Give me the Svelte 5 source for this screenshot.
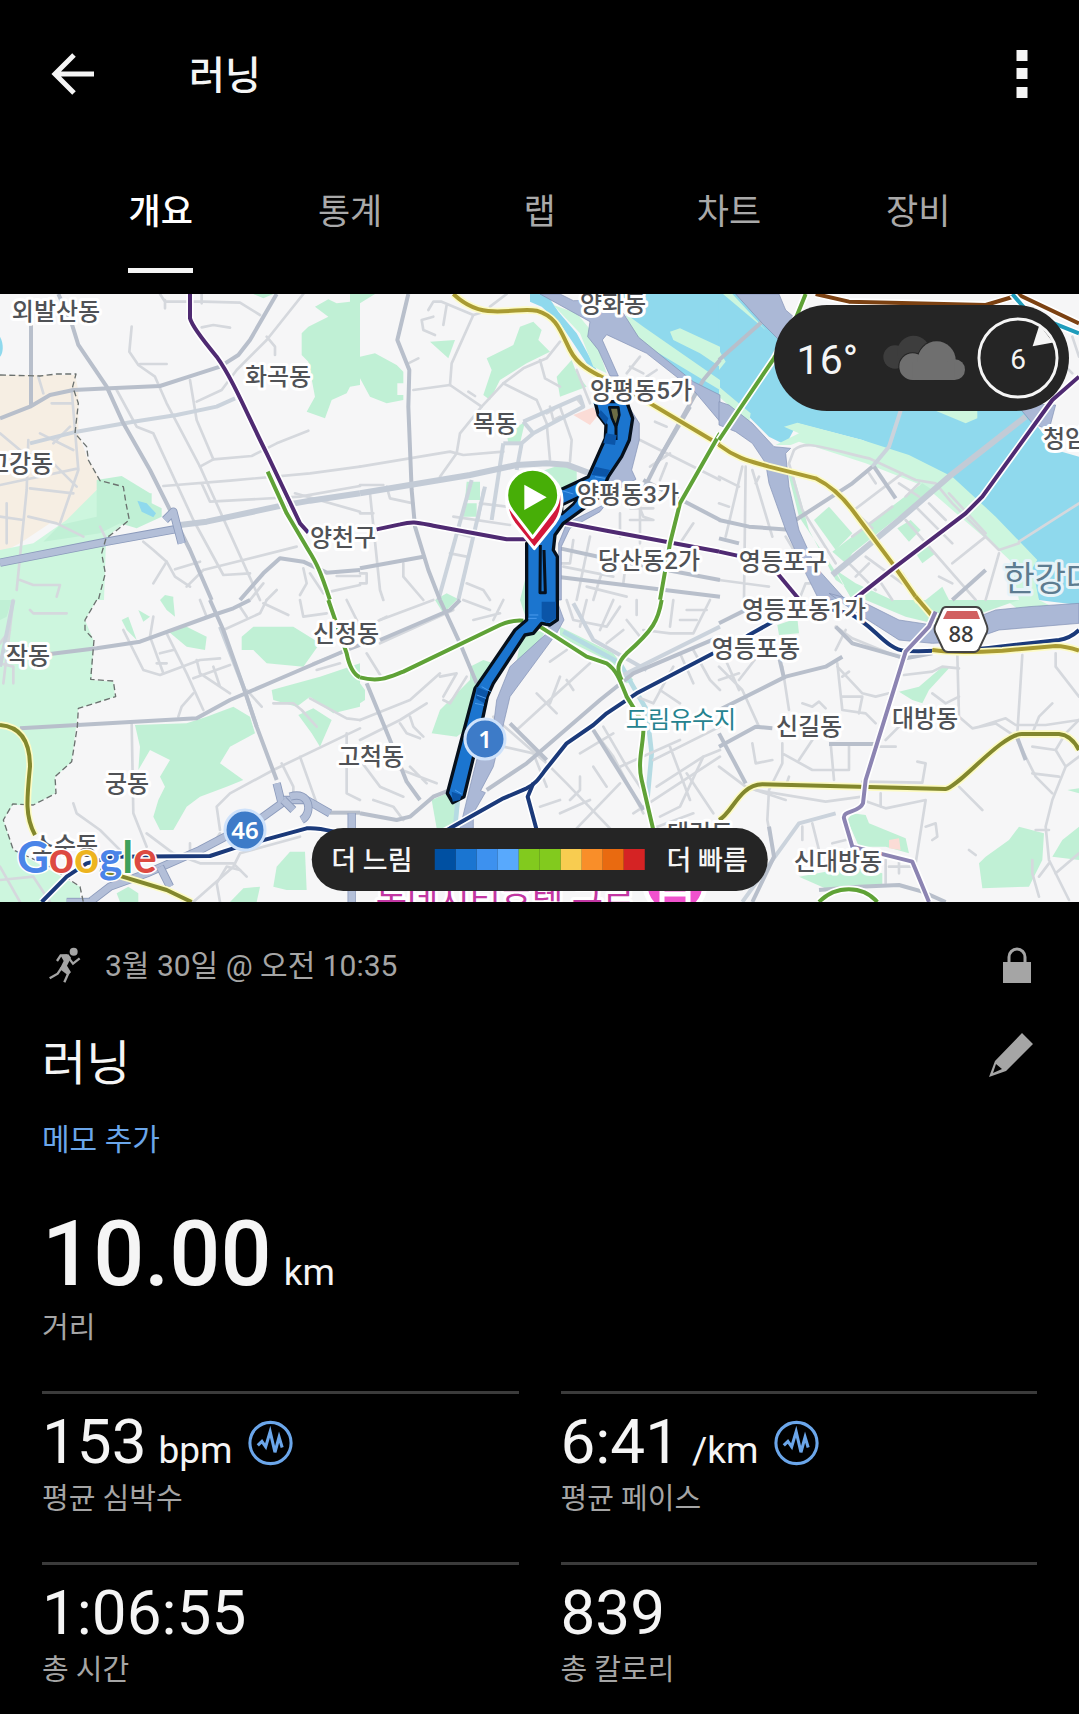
<script lang="ts">
  type Sheet = { x: number; y: number; paths: Record<string, string[]> };

  const tabs = ['개요', '통계', '랩', '차트', '장비'];
  let activeTab = $state('개요');

  const stats = [
    { value: '153', unit: 'bpm', label: '평균 심박수', zone: true },
    { value: '6:41', unit: '/km', label: '평균 페이스', zone: true },
    { value: '1:06:55', unit: '', label: '총 시간', zone: false },
    { value: '839', unit: '', label: '총 칼로리', zone: false }
  ];

  const paceColors = [
    '#0050a2', '#1a75d1', '#3d91ef', '#58a9fd', '#82ca1e',
    '#82ca1e', '#f8cc50', '#f98e29', '#e96a10', '#d52324'
  ];

  // Drawing order of the base map, bottom to top
  const layers = ['water', 'rural', 'meadow', 'park', 'pink', 'land', 'pond', 'canal', 'minor', 'road', 'major', 'arterial', 'expressway', 'freeway', 'border'];

  const transit = ['navy', 'olive', 'gold', 'brown', 'cyan', 'violet', 'purple', 'green'];

  // Map sheets, each one in its own coordinates at three units to a pixel
  const sheets: Sheet[] = [
    {
      x: 0, y: 0,
      paths: {
        rural: ['M0 255H225L235 300V430L250 470L260 500L300 570L290 600L250 700H150L60 760L0 790Z'],
        meadow: ['M100 760L200 690L290 600L370 590L385 690L340 725L318 750L312 930H0V780Z'],
        park: [
          'M290 570L365 558L450 610H455V640L485 655V680L410 715L360 700L300 730L130 755L180 705L290 680Z',
          'M925 110L985 80L945 50L985 28L1010 40L1050 35V12H1080V285L1050 290L1040 310L995 330L975 385L920 365L945 320L925 215L905 195V130Z',
          'M480 930L495 915L520 920V930Z',
          'M760 12H820L790 25Z'
        ],
        pond: ['M412 632L440 640L468 670L460 682L425 665Z', 'M0 140C12 160 10 190 0 200Z'],
        minor: [
          'M480 12L495 35H610L720 38L780 75M605 112L640 105L690 113M495 30V55M605 12V40',
          'M395 110L388 185L415 225L465 260L500 340L600 530L690 730L780 930',
          'M420 222H500M570 270L590 390L640 508L755 498L830 460L925 422',
          'M590 335L665 300L710 240L800 150L910 12M800 140L825 170V195',
          'M350 300L410 410L460 430L580 690L670 855L750 850M600 530L640 508',
          'M490 588L690 572L930 550L1080 530M605 580L630 635L900 620L1080 588',
          'M885 610L1080 665M610 840L890 770M610 840L560 890M430 755L460 780L500 815L525 860L570 890',
          'M500 815L460 880M525 838L600 815M910 835L920 880L900 915M930 850L970 910M1010 858H1080M990 905L1080 885',
          'M85 450L80 600L50 900M215 300L235 540L180 700M115 260L130 310M155 340H215M0 430L60 480M0 585L235 535',
          'M90 595L220 610M85 680L170 700L250 740M300 710L320 750M60 870L100 885H180L170 920M830 900L800 930M750 930L790 880',
          'M80 490L160 520L230 590M120 430L220 480M160 460L210 410M0 680L70 690M20 640V760'
        ],
        road: ['M90 460L230 425L400 395L530 375L650 350L705 325'],
        arterial: ['M540 705L620 695L830 650L930 632L1080 610'],
        major: [
          'M93 90V350', 'M175 12L215 100L235 165L320 290L370 400L450 540L510 660L570 780L635 930',
          'M0 385L90 350L150 315L220 300L330 295L480 288L560 262L660 230L715 195L750 150L830 12',
          'M720 930L790 850L840 805L910 815L980 848L1080 840'
        ],
        expressway: ['M0 818L320 755L535 716', 'M495 690L520 665L545 760'],
        border: ['M0 255L120 258L170 252H228L218 290L235 340L225 430L260 470L265 510L300 572L370 590L378 640L388 690L345 725L318 745L305 790L316 850L295 930'],
        purple: ['M570 12V85C575 105 600 140 650 200C700 270 740 370 800 490L900 700L925 728'],
        green: ['M803 545L860 670L925 780C950 820 960 840 990 930']
      }
    },
    {
      x: 1080, y: 0,
      paths: {
        water: ['M790 12H1080V330L1000 280L860 170L800 80Z', 'M510 12H560L595 65L650 130L710 240L680 220L600 100L545 50L510 35Z'],
        meadow: ['M795 70L850 110L1080 270V300L830 150Z', 'M580 45L650 70L700 130L740 250L700 230L660 130Z', 'M930 125L960 115L1080 170V230L1020 190L940 150Z'],
        park: [
          'M380 205L460 165L480 110L520 95L545 120L535 150L570 185L500 220L420 270L390 330L370 315L395 240Z',
          'M0 200L45 190L110 225L130 245V280H112V315H130V330L80 340L30 320L0 265Z',
          'M210 155L285 150L265 205Z', 'M590 260L635 210L650 250L680 290L600 320Z',
          'M540 545L600 525L650 540V570L600 600Z', 'M320 575H360V630H315Z', 'M315 640H350V680H310Z',
          'M440 430L495 395L480 460H445Z', 'M225 930L260 910L300 930Z', 'M480 930L500 850V930Z', 'M0 12H45L0 40Z'
        ],
        pink: ['M640 375L700 352L715 375L690 405Z'],
        minor: [
          'M0 530L270 485L310 495L430 485M160 300L270 285L365 350L430 280L490 235L560 205L600 155',
          'M390 60L340 75L275 220L270 285M340 75L245 35H220L205 60M260 45L250 105M220 80L185 90L190 120L225 135',
          'M365 350L300 430L290 490L240 560M430 280L530 330L560 400L570 510M600 350L635 450L630 515',
          'M540 210L555 265L600 290M650 240L690 340M325 305L345 318M145 220L175 205M390 50L440 12',
          'M30 610L60 900L70 930M0 670H40M80 590L90 625L160 640M0 585H70',
          'M280 680L450 705M290 730L330 740M270 790L320 800M320 880L370 900L390 930M130 820V860L190 930M0 850H20V880H0',
          'M560 370L580 360M570 350L580 390L600 380M650 325L670 350M360 640L440 650M355 690L370 600',
          'M840 450L1080 570M870 530L930 490M920 520L900 570M800 250L840 200M810 230L850 250M885 395L920 410M860 260L890 240',
          'M830 630L850 680L880 690M810 655H880M810 690H880M840 640V760M780 670V740M1000 700L960 760',
          'M690 740L650 930M640 750L630 820L600 820M740 800L700 930M610 830L760 860M680 890L800 920M800 800L790 880M760 800H800'
        ],
        road: ['M490 395L660 320L670 350L520 430L485 460L470 540', 'M490 395L520 430', 'M430 460L395 690', 'M335 570L235 930', 'M375 590L295 930', 'M430 460H485'],
        major: [
          'M145 12L112 150L148 240L145 350L155 600L165 710L205 840L240 930',
          'M0 835L190 800', 'M990 350L890 520', 'M1080 210L1030 270L890 520L850 600', 'M850 570L1080 690',
          'M600 775L760 810L1080 870', 'M590 860L1080 920'
        ],
        arterial: ['M0 610L330 555L470 525L560 520L620 524L690 550'],
        freeway: [
          'M540 12L690 95L683 140L715 180L750 258H775L727 150L740 134L860 190L1000 300L1080 395V315L1000 275L836 142L790 70L740 30L640 32L600 12Z',
          'M800 340L838 400V450L815 540L828 568L770 600L745 570L805 440Z',
          'M740 640L620 700L596 760V930H604V770L630 715L720 665Z'
        ],
        gold: ['M280 12C310 40 350 64 400 64C460 66 490 55 530 62C590 80 600 120 630 180C660 240 720 255 800 300L870 340L1080 465'],
        purple: ['M50 718L120 703C160 693 170 697 220 707L440 748H520', 'M600 695L740 722L1080 785'],
        green: ['M1080 430L960 640L930 760L900 930']
      }
    },
    {
      x: 2157, y: 0,
      paths: {
        water: ['M0 12H60L240 170L700 340L920 362L1010 480L1080 500V930H960L830 690L700 570L430 450L235 400L200 465L150 440L0 290Z'],
        meadow: [
          'M195 410L235 398L430 450L570 495L700 560L830 680L955 810L925 860L840 780L700 660L620 590L440 520L240 455L215 465L170 465L240 430Z',
          'M0 180L20 215L0 240Z', 'M0 290L95 370L90 400L0 320Z', 'M650 362H775V385L740 400Z', 'M12 12H40L140 120Z', 'M870 790L940 830L960 930H900Z'
        ],
        park: [
          'M285 690L330 650L400 730L350 780Z', 'M340 785L610 580L640 600L400 790L380 820Z',
          'M205 540L240 680L340 830L400 930H440L350 870L270 720L220 540Z',
          'M535 715L575 690L605 720L570 755Z', 'M590 790L620 765L650 790L610 820Z', 'M620 930L670 890L690 930Z', 'M350 840L410 880L520 930H400Z'
        ],
        minor: [
          'M225 480C260 450 300 470 450 505L590 570L650 580L700 640L840 780L900 760M225 480L210 520L250 660L350 820',
          'M350 610L460 715M405 660L550 550M450 550L470 580M540 580L600 620M600 580L560 620M400 740L520 650',
          'M590 650L700 760M630 640L680 690M690 610L800 730M620 760L690 700M700 820L800 740M560 690L700 850L770 930',
          'M550 850L600 930M660 860L700 880M800 930L840 790M390 820L470 900M410 860L450 820M480 870L520 930M440 800L550 880',
          'M80 530L75 930M20 740L70 530M100 540L160 740M0 560L60 590M120 560L110 580M0 640L30 650M0 870L150 890M200 740L230 790',
          'M1080 640L900 755M240 930L260 880H300M1020 160V210L1060 250M1060 140L1080 200'
        ],
        road: ['M545 362L510 470L460 530'],
        major: ['M135 90L0 210', 'M460 530L400 580L230 690', 'M465 530L530 625', 'M0 690L90 710L220 720', 'M0 745L60 760', 'M800 840L700 930'],
        arterial: ['M920 380L690 560L540 690L340 855'],
        freeway: [
          'M50 12H180L200 60L235 90L180 150L130 100Z', 'M0 335L30 345L100 400L165 470L215 475L200 490L210 590L240 720L290 830L380 930H300L260 850L200 720L150 580L140 520L100 460L50 425L0 405Z',
          'M890 340L1010 345L990 420L940 400Z'
        ],
        gold: ['M0 465C60 510 100 515 150 530L290 565C340 590 370 620 400 660L520 820L600 935'],
        brown: ['M290 12L390 35L800 45L900 15L1080 100'],
        cyan: ['M880 12L930 70L1080 130'],
        purple: ['M1080 260L1000 330L790 620L740 670L530 830L390 940', 'M0 785L55 797', 'M150 820L250 940'],
        green: ['M260 12L220 110L165 205L60 360L0 450']
      }
    },
    {
      x: 0, y: 930,
      paths: {
        meadow: ['M0 0H290L255 60L280 120L275 240L340 245L345 290L235 325L215 485L165 530V580L100 615H38L10 660L40 750L240 860V906H0Z'],
        park: [
          'M365 60L385 50L410 120L380 90Z', 'M415 30L450 50L430 65Z', 'M480 0H520L525 50L500 30Z',
          'M500 90L560 80L620 110L615 150L560 140Z', 'M725 110L760 80H880L960 130L910 200L800 190L760 150L725 150Z',
          'M815 270L960 230L1080 190V320L1000 340L930 290L890 320L820 300Z', 'M895 345L940 325L995 360L960 440L935 400Z',
          'M405 375L560 370L620 350L700 320L750 350L765 400L690 440L660 490L730 540L680 560L600 590L560 620L520 690L480 690L460 650L475 600L495 560L480 530L510 480L450 450L415 510L420 440Z',
          'M830 800L870 755H915L920 870H860L820 860Z', 'M350 880L385 860L415 880V906H360Z', 'M690 906L730 865L780 860L770 906Z',
          'M0 0H35L20 50L0 60Z'
        ],
        minor: [
          'M395 370L400 640L440 740M820 510L1080 385M820 510L690 580L650 620L660 690M900 470L950 610M845 490L880 560V600',
          'M220 610L230 640L300 690L370 760M440 700L520 760L600 790H700L740 830M370 90L430 210L480 225L600 180L660 175',
          'M500 100L560 220L610 330M460 50L450 110L490 220M930 295L1040 355L1080 360M580 906L700 800L720 760L900 710',
          'M820 310H880L905 330L950 380M590 180L600 220L690 280M580 235L690 195M640 200L660 260M580 280L545 320L535 350M740 270L785 320',
          'M670 90L780 40L800 0M720 20L740 50M600 0L620 50M900 0L910 50L980 40M790 10L865 45M1040 0L1080 80M480 160L520 150M470 190H500',
          'M1040 500V580L1080 600M940 190L1020 160M950 210L1020 190M0 840L100 830L150 906M0 800L60 906M570 730V760M640 730L660 700M660 906L650 850L680 800L720 810M1040 400V440',
          'M40 0L10 250M90 30L100 40H200M0 130L30 90M0 190L40 200V250'
        ],
        road: ['M40 0L0 200', 'M660 80L730 260L770 380'],
        major: [
          'M630 0L670 90L730 260L770 380L830 540', 'M150 162L290 145L420 125L640 45L700 25L750 0',
          'M60 385L590 355L690 300L830 240L1040 150L1080 135', 'M300 770H500', 'M990 638H1080'
        ],
        expressway: [
          'M830 550L845 610L790 650L600 750L440 820L330 860L270 906', 'M850 600H920L990 640',
          'M870 590C930 570 940 640 905 660M850 600L880 630', 'M1055 640V906', 'M480 800L510 860', 'M200 906H270'
        ],
        border: [
          'M290 0L255 60V90L282 120L272 238L340 243L347 290L235 325L232 380L215 485L165 530L168 580L100 615L38 612L10 660L40 750L150 800L240 860L250 906'
        ],
        olive: ['M0 375C60 380 90 420 90 500C80 600 75 650 105 705', 'M300 810L385 835L500 870L575 906'],
        navy: ['M125 906L200 830L260 790L340 770L630 768L700 745L810 715L920 685C970 680 1000 700 1080 710'],
        green: ['M985 0L1040 160C1050 210 1065 225 1080 232']
      }
    },
    {
      x: 1080, y: 930,
      paths: {
        park: [
          'M370 180L400 190L330 380L290 410L215 400L240 330L330 240V200Z', 'M500 100L560 90L460 240L480 130Z',
          'M215 600L260 580L300 600L290 685H230Z', 'M600 80L760 160L820 240L800 250L720 170L600 110Z', 'M225 0H290L250 40Z', 'M0 250L15 270V300L0 310Z',
          'M480 0H500V60Z'
        ],
        canal: ['M610 95L780 190L860 330L875 460L860 620', 'M293 600L285 685'],
        minor: [
          'M60 60L220 0M60 130L280 30M240 220L150 300L0 360M250 290L290 220L240 230M250 300L270 310L320 230',
          'M0 420L120 360L200 310M120 370L140 400L180 415M150 350L160 380L190 410M100 500L230 550M150 500L200 550M0 480L60 560L130 590',
          'M400 350L560 490L620 550L750 685M470 390L690 190M530 280L590 340M600 230L570 310M620 240L640 270M570 185L620 150',
          'M560 560L520 460L430 440M540 620L600 600M660 530V570L630 600M650 685L780 550M700 500L740 560M600 640L690 600',
          'M700 390L760 470L850 640M730 380L800 500L860 590M660 460L760 400M780 500L960 420M880 480L1080 380M930 440L990 600M1080 450L1030 470L960 620L900 650',
          'M820 640L1080 470M890 560L1030 470M980 520L1060 640M880 685L1000 640M940 200L880 310L830 290M900 270L960 310M960 160L1000 250M1000 150L1050 240L1080 270',
          'M620 0L640 60L740 80L780 20M680 0L660 80M760 0L720 90M830 0V45M850 90L930 100H1000L1050 0M940 0L930 80M980 30H1040M960 60H1010M740 130L790 90M800 60L840 110',
          'M40 600L100 620L130 660M340 60L420 40M430 0L400 60M20 80L80 50M20 160L70 240M310 0L390 30'
        ],
        road: ['M780 230L1080 80', 'M640 10L700 120L860 210'],
        major: [
          'M1080 110L820 220L720 300L500 490L380 570', 'M0 640L110 660L150 650L220 590L270 570', 'M20 250L90 420L140 545L180 600',
          'M60 120L270 30L300 0', 'M240 0L300 130L350 250', 'M450 370L560 480', 'M700 390L850 630'
        ],
        freeway: ['M590 0L612 60L590 100L450 290L400 500L362 572L376 578L340 640V685H300L330 560L350 480L400 380L410 300L450 200L560 100Z'],
        navy: ['M0 710C120 720 200 730 270 685L430 595L500 565C530 550 540 530 560 505L620 430L700 375L740 340L830 280L1060 160', 'M520 550L503 590L530 690'],
        green: [
          'M0 232C60 248 90 230 130 215L420 75C450 62 470 60 490 62', 'M540 80L680 170L740 190C770 210 780 240 800 290L850 370C855 420 830 480 845 540L880 690',
          'M905 0C895 60 880 90 800 160C770 190 770 210 785 240'
        ]
      }
    },
    {
      x: 2157, y: 930,
      paths: {
        water: ['M960 0H1080V15L1000 5Z'],
        meadow: ['M860 0H960L1000 20L900 30Z'],
        park: [
          'M440 0H900L800 35L740 60L640 70L560 50Z', 'M175 75L235 55L240 100L180 105Z',
          'M540 275L600 260L670 200L690 205L630 270L610 310L580 300Z', 'M385 660L400 640L440 645L450 670L560 715L570 760L500 740L420 740Z',
          'M240 830L400 800L490 820V860L330 870Z', 'M780 790L800 770L870 720L900 680L975 700L970 780L930 860L790 865Z', 'M1030 720L1080 680V780L1000 770Z',
          'M1045 570L1080 565V580Z'
        ],
        pink: ['M510 720L540 715L545 750L510 745Z'],
        minor: [
          'M0 200L70 270L120 380M60 240L130 150M20 180L60 270M190 200L210 330M355 190L370 330L440 340L470 370M370 290H430L420 340M355 200L430 280L470 290L510 280M370 230L390 215',
          'M715 165L720 350L760 385L830 370L890 410L950 530L1000 580M780 380L860 355L890 375H980L1080 360M910 165L895 400M1010 160V200L1080 290M1000 310L960 350L940 400',
          'M640 280L680 310L720 290M555 225L640 215L670 200L720 205M350 150L380 90M350 80L400 115L560 180M250 310L280 320L300 305L320 325M280 350H320',
          'M335 430L345 540M390 435V510L280 510L190 460V430M190 440V490L150 570L145 660L160 740M100 430L110 490L160 480M240 480L280 420M480 440H530M500 420L540 380',
          'M110 570L320 605L430 590M430 545L610 548L620 490L595 485M430 600L500 625L620 600L590 790L600 830M485 580V620M620 680L650 670L655 710L640 720M720 560L790 630',
          'M280 670L300 750M250 680V720M1080 470L1040 500L1000 600L980 680L990 780L1050 900M940 520L1020 530M950 690H990M940 440L1010 450M1040 500L1010 450L1040 400L1080 360',
          'M940 780V820L960 890M500 780V850M540 780V820M510 800H580M960 830L990 790M750 750L770 765M1010 820L1080 760M0 500L80 560L200 600M0 240L60 220M340 730L380 720M210 530L200 560'
        ],
        road: ['M70 906L240 670L350 640'],
        major: [
          'M0 330L200 230L320 200L370 170', 'M0 440L110 380L160 385', 'M0 400L80 550', 'M330 432H480', 'M180 170L195 235', 'M150 680L165 770L100 906',
          'M300 870L420 860L540 855L610 875L680 906', 'M890 400L920 480', 'M350 80L400 130L560 175L640 160', 'M0 70L100 20'
        ],
        freeway: ['M330 -20L440 10L540 60L640 75L740 65L830 30L930 20L1080 10V70L960 80L840 90L740 125L640 130L540 120L470 75L400 30Z'],
        gold: ['M590 -10L650 60', 'M640 150C700 160 800 155 850 152L1010 138C1040 138 1060 145 1080 152'],
        navy: ['M60 125L90 105L180 55L300 20L390 40C460 70 500 150 560 153C640 155 760 150 840 140L1020 120C1050 115 1070 100 1080 90'],
        olive: ['M0 660C40 640 60 555 130 553L680 567C720 560 850 400 910 402H1020C1050 405 1070 430 1080 450'],
        violet: ['M650 35L630 80L560 155L440 540L432 610C420 640 370 630 375 655L400 740L580 785L630 906'],
        green: ['M300 906C350 855 430 855 475 906']
      }
    }
  ];

  const places = [
    { name: '외발산동', x: 56, y: 26 },
    { name: '화곡동', x: 278, y: 91 },
    { name: '고강동', x: 20, y: 178 },
    { name: '양천구', x: 343, y: 252 },
    { name: '양화동', x: 613, y: 18 },
    { name: '양평동5가', x: 641, y: 105 },
    { name: '목동', x: 495, y: 138 },
    { name: '양평동3가', x: 628, y: 209 },
    { name: '당산동2가', x: 649, y: 275 },
    { name: '영등포구', x: 783, y: 276 },
    { name: '청암동', x: 1076, y: 153 },
    { name: '작동', x: 28, y: 370 },
    { name: '궁동', x: 127, y: 498 },
    { name: '신정동', x: 346, y: 348 },
    { name: '고척동', x: 371, y: 471 },
    { name: '영등포동1가', x: 804, y: 324 },
    { name: '영등포동', x: 756, y: 363 },
    { name: '신길동', x: 809, y: 441 },
    { name: '대방동', x: 925, y: 433 },
    { name: '신대방동', x: 838, y: 576 },
    { name: '대림동', x: 700, y: 548 },
    { name: '소수동', x: 65, y: 560 }
  ];

  const routeOutline =
    'M705 335H800L818 385L808 450L785 500L745 560L720 620L610 700L585 735L580 780L592 800V990L570 1005L545 1000L520 1030L495 1035L400 1180L382 1220L365 1300L312 1520L278 1538L262 1510L345 1195L390 1130L465 1020L500 990V760L560 700L600 600L685 560L736 445L738 405L715 375Z';
</script>

<div class="activity">
  <header class="app-bar">
    <button class="icon-button" aria-label="뒤로">
      <svg class="back" viewBox="0 0 44 44">
        <path d="M42 22H4M22 3L3 22L22 41" />
      </svg>
    </button>
    <h1>러닝</h1>
    <button class="icon-button more" aria-label="더보기">
      <svg class="dots" viewBox="0 0 11 48">
        <path d="M0 0H11V11H0ZM0 18H11V29H0ZM0 37H11V48H0Z" />
      </svg>
    </button>
  </header>

  <nav class="tabs">
    {#each tabs as tab}
      <button class="tab" class:active={tab === activeTab} onclick={() => (activeTab = tab)}>
        <span>{tab}</span>
      </button>
    {/each}
  </nav>

  <section class="map">
    <svg class="map-canvas" viewBox="0 0 1079 608" role="img" aria-label="코스 지도">
      <g transform="scale(0.33333) translate(0 -12)">
        {#each layers as layer}
          {#each sheets as sheet}
            <g class={layer} transform="translate({sheet.x} {sheet.y})">
              {#each sheet.paths[layer] ?? [] as d}
                {#if layer === 'expressway'}
                  <path class="casing" {d} />
                {/if}
                <path {d} />
              {/each}
            </g>
          {/each}
        {/each}

        {#each transit as line}
          {#each sheets as sheet}
            <g class="line {line}" transform="translate({sheet.x} {sheet.y})">
              {#each sheet.paths[line] ?? [] as d}
                <path class="halo" {d} />
              {/each}
              {#each sheet.paths[line] ?? [] as d}
                <path {d} />
              {/each}
            </g>
          {/each}
        {/each}

        <g class="route" transform="translate(1080 0)">
          <path class="track" d={routeOutline} />
          <path class="gap" d="M748 352H775L778 375L768 412L756 385Z" />
          <path class="sliver" d="M606 645L655 622L640 642L606 672Z" />
          <path class="seam" d="M541 765L540 908H556L552 780M768 412V450" />
          <path class="shade" d="M722 360L745 385L738 405L715 375ZM738 430L770 435L765 465L730 460ZM705 530L750 540L740 560L695 555ZM545 935H588V985L560 1000L545 985ZM350 1190L385 1205L372 1240L348 1225ZM275 1505L305 1515L300 1530L278 1535Z" />
          <path class="glint" d="M508 975H535M505 985H530M365 1190L392 1205M350 1215L378 1225M345 1240L372 1246M705 560L735 565M600 600L640 612M285 1500L305 1512" />
        </g>
      </g>

      {#each places as place}
        <text class="place" x={place.x} y={place.y}>{place.name}</text>
      {/each}
      <text class="place river" x="1066" y="297">한강대교</text>
      <text class="place basin" x="681" y="434">도림유수지</text>
      <text class="place hotel" x="505" y="619">동네시티호텔 구로</text>

      <g class="hotel-pin">
        <circle cx="675" cy="590" r="30" />
        <path d="M662 588V608M688 588V608M662 600H688" />
      </g>

      <g class="badge">
        <circle cx="245" cy="536" r="20" />
        <text x="245" y="545">46</text>
        <circle cx="485" cy="445" r="20" />
        <text x="485" y="454">1</text>
      </g>

      <g class="shield">
        <path d="M946 313H976Q979 313 981 316L987 332Q988 335 987 338L979 355Q977 358 974 358H948Q945 358 943 355L935 338Q934 335 935 332L942 316Q943 313 946 313Z" />
        <path class="shield-top" d="M947 317H977L980 325H943Z" />
        <text x="961" y="348">88</text>
      </g>

      <g class="pins" transform="scale(0.33333) translate(1080 -12)">
        <path class="finish" d="M523 776L462 700Q440 670 440 630A80 80 0 0 1 606 630Q606 670 584 700Z" />
        <path class="start" d="M518 742L458 664Q440 642 440 616A78 78 0 0 1 596 616Q596 642 578 664Z" />
        <path class="play" d="M493 584V660L560 622Z" />
      </g>

      <text class="google" x="17" y="579"><tspan class="g-blue">G</tspan><tspan class="g-red">o</tspan><tspan class="g-yellow">o</tspan><tspan class="g-blue">g</tspan><tspan class="g-green">l</tspan><tspan class="g-red">e</tspan></text>
    </svg>

    <div class="weather">
      <span class="temperature">16°</span>
      <svg class="clouds" viewBox="0 0 246 136">
        <g class="cloud-back">
          <circle cx="36" cy="65" r="35" />
          <circle cx="92" cy="50" r="49" />
        </g>
        <g class="cloud-gap">
          <circle cx="89" cy="94" r="43" />
          <circle cx="161" cy="75" r="60" />
        </g>
        <g class="cloud-front">
          <circle cx="89" cy="94" r="40" />
          <circle cx="161" cy="75" r="57" />
          <circle cx="215" cy="103" r="31" />
          <path d="M89 80H215V134H89Z" />
        </g>
      </svg>
      <div class="wind">
        <svg viewBox="0 0 84 84">
          <circle cx="42" cy="42" r="40" />
          <path d="M64 8L78 26L57 30Z" />
        </svg>
        <span>6</span>
      </div>
    </div>

    <div class="legend">
      <span>더 느림</span>
      <div class="scale">
        {#each paceColors as color}
          <i style="background: {color}"></i>
        {/each}
      </div>
      <span>더 빠름</span>
    </div>
  </section>

  <main class="details">
    <div class="meta">
      <svg class="runner" viewBox="0 0 97 108">
        <circle cx="76" cy="14" r="12" />
        <path class="torso" d="M36 24L60 22L68 32L56 56L68 76L58 84L34 66L46 42Z" />
        <path class="limbs" d="M26 42L37 25L56 25M62 34L74 50L94 34M62 74L48 106M40 62L28 80L4 94" />
      </svg>
      <span class="date">3월 30일 @ 오전 10:35</span>
      <svg class="lock" viewBox="0 0 28 36">
        <path class="shackle" d="M6 17V10A8 8 0 0 1 22 10V17" />
        <path d="M0 15H28V36H0Z" />
      </svg>
    </div>

    <div class="title-row">
      <h2>러닝</h2>
      <button class="icon-button" aria-label="이름 편집">
        <svg class="pencil" viewBox="0 0 44 44">
          <path d="M33 0L44 11L17 38L0 44L6 28ZM7 31L4 40L13 36Z" />
        </svg>
      </button>
    </div>

    <a class="memo" href="#memo">메모 추가</a>

    <div class="distance">
      <p class="value"><strong>10.00</strong> <span class="unit">km</span></p>
      <p class="label">거리</p>
    </div>

    <div class="stats">
      {#each stats as stat}
        <div class="stat">
          <p class="value">
            <span>{stat.value}</span>
            {#if stat.unit}
              <span class="unit">{stat.unit}</span>
            {/if}
            {#if stat.zone}
              <svg class="zone" viewBox="0 0 130 134">
                <circle cx="65" cy="67" r="60" />
                <path d="M28 74L40 62L51 78L64 34L78 94L90 50L99 80" />
              </svg>
            {/if}
          </p>
          <p class="label">{stat.label}</p>
        </div>
      {/each}
    </div>
  </main>
</div>

<style>
  :global(body) {
    background: #000;
  }

  .activity {
    background: #000;
    color: #f5f5f5;
    font-family: Roboto, 'Noto Sans CJK KR', sans-serif;
  }

  h1,
  h2,
  p {
    margin: 0;
    font-weight: 400;
  }

  button {
    padding: 0;
    border: 0;
    background: none;
    color: inherit;
    font: inherit;
    cursor: pointer;
  }

  svg {
    display: block;
  }

  .app-bar {
    display: flex;
    align-items: center;
    height: 147px;
    padding: 0 51px;
  }

  .icon-button {
    display: flex;
    align-items: center;
  }

  .back {
    width: 46px;
    height: 44px;
    fill: none;
    stroke: #f5f5f5;
    stroke-width: 5;
  }

  .app-bar h1 {
    margin-left: 92px;
    padding-bottom: 4px;
    font-size: 39px;
    font-weight: 500;
  }

  .more {
    margin-left: auto;
  }

  .dots {
    width: 12px;
    height: 48px;
    fill: #f5f5f5;
  }

  .tabs {
    display: grid;
    grid-template-columns: repeat(5, 1fr);
    height: 147px;
    padding: 0 66px;
  }

  .tab {
    display: flex;
    justify-content: center;
    align-items: flex-start;
    color: #a9a9a9;
    font-size: 35px;
  }

  .tab span {
    height: 87px;
    margin-top: 34px;
    border-bottom: 5px solid transparent;
    line-height: 64px;
  }

  .tab.active {
    color: #fff;
    font-weight: 500;
  }

  .tab.active span {
    border-color: #f5f5f5;
  }

  .map {
    position: relative;
    overflow: hidden;
    background: #f6f6f7;
  }

  .map-canvas {
    width: 100%;
    height: auto;
  }

  .rural {
    fill: #f6eee3;
  }

  .park {
    fill: #c0f0d5;
  }

  .meadow {
    fill: #cdf6de;
  }

  .water,
  .pond {
    fill: #8fd9ed;
  }

  .pink {
    fill: #fbdcd6;
  }

  .canal,
  .minor,
  .road,
  .major,
  .arterial,
  .expressway,
  .border,
  .line {
    fill: none;
    stroke-linejoin: round;
  }

  .canal {
    stroke: #b5dbe3;
    stroke-width: 14;
  }

  .minor {
    stroke: #d5d8dd;
    stroke-width: 8;
    stroke-linecap: round;
  }

  .road {
    stroke: #cbd3dc;
    stroke-width: 12;
  }

  .major {
    stroke: #b8bfcb;
    stroke-width: 12;
  }

  .arterial {
    stroke: #c3cbd6;
    stroke-width: 18;
  }

  .expressway {
    stroke: #b3bfd8;
    stroke-width: 20;
  }

  .expressway .casing {
    stroke: #8b9abb;
    stroke-width: 25;
  }

  .freeway {
    fill: #abb8d6;
    stroke: #8090b4;
    stroke-width: 2;
  }

  .border {
    stroke: #6b716f;
    stroke-width: 4;
    stroke-dasharray: 18 10;
  }

  .line {
    stroke-width: 12;
  }

  .line .halo {
    stroke: #fff;
    stroke-width: 22;
  }

  .green {
    stroke: #5fa237;
  }

  .purple {
    stroke: #4f2a72;
  }

  .gold {
    stroke: #a99b33;
  }

  .navy {
    stroke: #1b3a7a;
  }

  .olive {
    stroke: #82872d;
  }

  .olive .halo,
  .gold .halo {
    stroke: #fdfbc4;
  }

  .violet {
    stroke: #8c84b2;
  }

  .brown {
    stroke: #7b4112;
  }

  .cyan {
    stroke: #1f9cbb;
  }

  .route {
    fill: none;
    stroke-linejoin: round;
  }

  .track {
    fill: #1b75cf;
    stroke: #06101c;
    stroke-width: 10;
  }

  .gap {
    fill: #6d6d45;
    stroke: #06101c;
    stroke-width: 8;
  }

  .sliver {
    fill: #e4e8ea;
    stroke: #06101c;
    stroke-width: 8;
  }

  .seam {
    stroke: #06101c;
    stroke-width: 9;
  }

  .shade {
    fill: #0b55a8;
  }

  .glint {
    stroke: #4b9cee;
    stroke-width: 3;
  }

  .place {
    fill: #505256;
    stroke: #fff;
    stroke-width: 6;
    stroke-linejoin: round;
    paint-order: stroke;
    font-size: 24px;
    font-weight: 500;
    text-anchor: middle;
  }

  .river {
    fill: #5d7c90;
    stroke: #e6f3f8;
    font-size: 34px;
    font-weight: 400;
  }

  .basin {
    fill: #26838f;
    font-weight: 400;
  }

  .hotel {
    fill: #c236a2;
    font-size: 34px;
    font-weight: 400;
  }

  .hotel-pin {
    fill: #f052cd;
    stroke: #fff;
    stroke-width: 5;
  }

  .badge circle {
    fill: #3d7bc8;
    stroke: #cfe2fa;
    stroke-width: 3;
  }

  .badge text {
    fill: #fff;
    font-family: 'Noto Sans', sans-serif;
    font-size: 24px;
    font-weight: 600;
    text-anchor: middle;
  }

  .shield path {
    fill: #fff;
    stroke: #444;
    stroke-width: 2;
  }

  .shield .shield-top {
    fill: #d16060;
    stroke: none;
  }

  .shield text {
    fill: #3c3c3c;
    font-family: 'Noto Sans', sans-serif;
    font-size: 22px;
    font-weight: 500;
    text-anchor: middle;
  }

  .pins path {
    stroke: #fff;
    stroke-width: 9;
    stroke-linejoin: round;
  }

  .pins .finish {
    fill: #d3183b;
  }

  .pins .start {
    fill: #47ae07;
  }

  .pins .play {
    fill: #fff;
    stroke: none;
  }

  .google {
    stroke: #fff;
    stroke-width: 3;
    paint-order: stroke;
    font-family: Lato, sans-serif;
    font-size: 44px;
    font-weight: 700;
  }

  .g-blue {
    fill: #4a84e8;
  }

  .g-red {
    fill: #dd4a41;
  }

  .g-yellow {
    fill: #edb41f;
  }

  .g-green {
    fill: #3fa15a;
  }

  .weather {
    position: absolute;
    top: 11px;
    right: 10px;
    display: flex;
    align-items: center;
    height: 106px;
    padding: 0 10px 0 23px;
    border-radius: 53px;
    background: #252525;
  }

  .temperature {
    margin-top: 4px;
    font-size: 41px;
  }

  .clouds {
    width: 82px;
    height: 46px;
    margin: 0 12px 0 25px;
  }

  .cloud-back {
    fill: #3d3d3d;
  }

  .cloud-gap {
    fill: #252525;
  }

  .cloud-front {
    fill: #6f6f6f;
  }

  .wind {
    display: grid;
    place-items: center;
  }

  .wind svg,
  .wind span {
    grid-area: 1 / 1;
  }

  .wind svg {
    width: 82px;
    height: 82px;
  }

  .wind circle {
    fill: none;
    stroke: #f5f5f5;
    stroke-width: 3;
  }

  .wind path {
    fill: #f5f5f5;
  }

  .wind span {
    padding-top: 2px;
    font-size: 28px;
  }

  .legend {
    position: absolute;
    bottom: 11px;
    left: 50%;
    display: flex;
    align-items: center;
    gap: 22px;
    height: 63px;
    padding: 0 20px;
    border-radius: 32px;
    background: #252525;
    font-size: 27px;
    font-weight: 500;
    white-space: nowrap;
    transform: translateX(-50%);
  }

  .legend span {
    padding-bottom: 2px;
  }

  .scale {
    display: flex;
  }

  .scale i {
    width: 21px;
    height: 21px;
  }

  .details {
    padding: 36px 42px 24px;
  }

  .meta {
    display: flex;
    align-items: center;
    height: 54px;
    padding: 0 6px;
    color: #a5a5a5;
  }

  .runner {
    width: 33px;
    height: 36px;
    margin-right: 24px;
    fill: #a5a5a5;
  }

  .runner .limbs {
    fill: none;
    stroke: #a5a5a5;
    stroke-width: 7;
  }

  .date {
    padding-bottom: 4px;
    font-size: 30px;
  }

  .lock {
    width: 28px;
    height: 36px;
    margin-left: auto;
    fill: #a5a5a5;
  }

  .lock .shackle {
    fill: none;
    stroke: #a5a5a5;
    stroke-width: 3;
  }

  .title-row {
    display: flex;
    justify-content: space-between;
    align-items: flex-start;
    margin-top: 39px;
    padding-right: 4px;
  }

  .title-row h2 {
    font-size: 48px;
    line-height: 66px;
  }

  .title-row button {
    padding-top: 2px;
  }

  .pencil {
    width: 44px;
    height: 44px;
    fill: #a5a5a5;
    fill-rule: evenodd;
  }

  .memo {
    display: block;
    width: fit-content;
    margin-top: 21px;
    color: #6ba6ea;
    font-size: 30px;
    line-height: 44px;
    text-decoration: none;
  }

  .distance {
    margin-top: 43px;
  }

  .distance .value {
    display: flex;
    align-items: baseline;
    gap: 12px;
    height: 100px;
    font-size: 90px;
    line-height: 100px;
  }

  .distance strong {
    font-weight: 500;
  }

  .unit {
    font-size: 37px;
  }

  .label {
    color: #a5a5a5;
    font-size: 29px;
    line-height: 40px;
  }

  .distance .label {
    margin-top: 3px;
  }

  .stats {
    display: grid;
    grid-template-columns: 1fr 1fr;
    gap: 43px 42px;
    margin-top: 43px;
  }

  .stat {
    padding-top: 12px;
    border-top: 3px solid #3b3b3b;
  }

  .stat .value {
    display: flex;
    align-items: baseline;
    gap: 12px;
    height: 73px;
    font-size: 62px;
    line-height: 72px;
  }

  .zone {
    align-self: center;
    width: 45px;
    height: 46px;
    margin-left: 3px;
    fill: none;
    stroke: #6ba6ea;
    stroke-width: 9;
  }
</style>
